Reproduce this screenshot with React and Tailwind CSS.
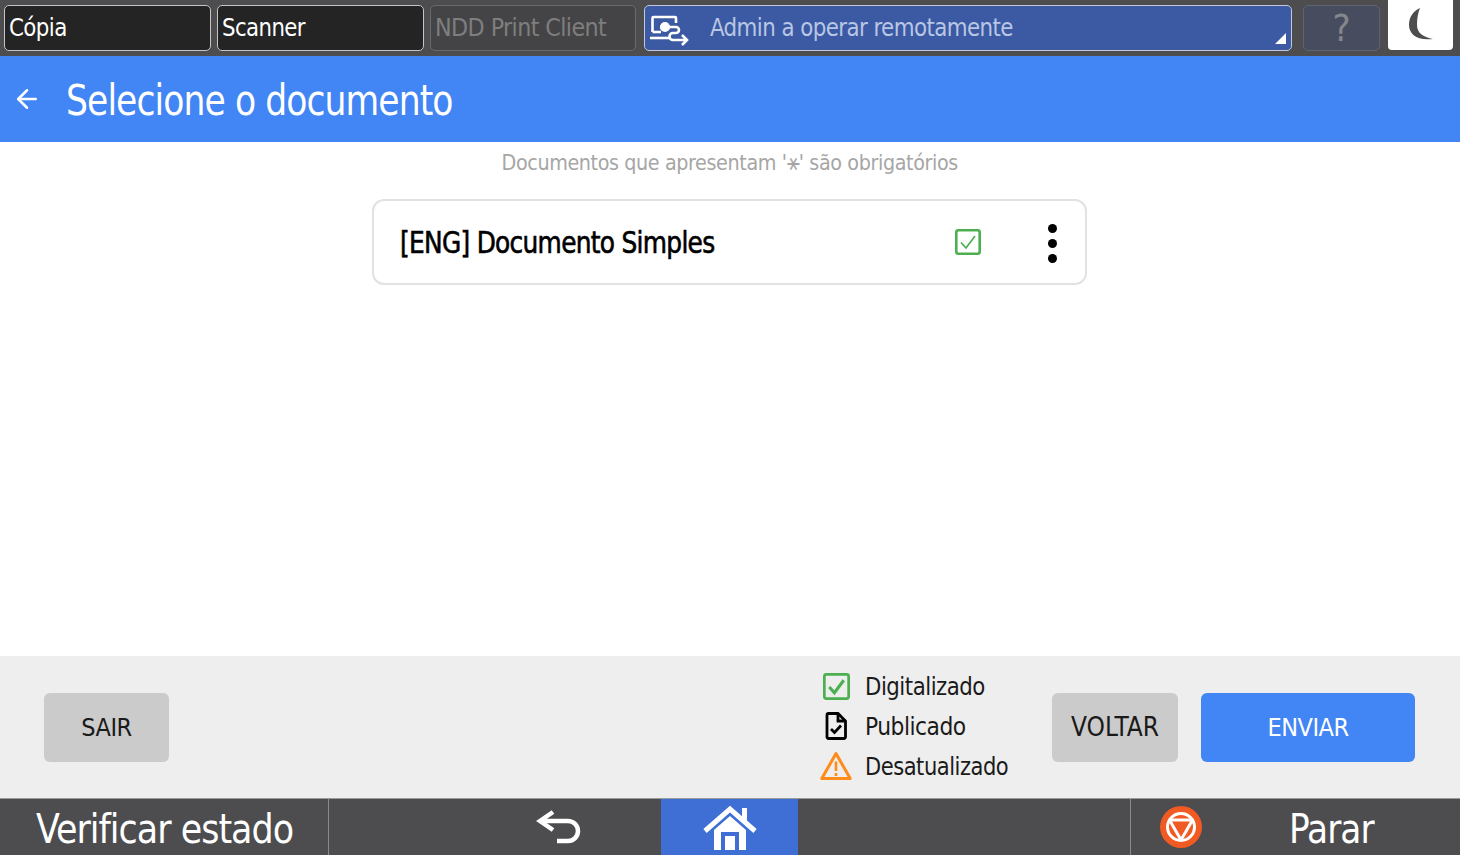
import { ArrowLeft } from 'lucide-react';

const font = { fontFamily: '"DejaVu Sans Condensed", "DejaVu Sans", sans-serif' };

function TopTab({ label, className, textClass }) {
  return (
    <div className={`h-[46px] rounded-[5px] border flex items-center pl-1 ${className}`}>
      <span className={`-mt-[2px] origin-left text-[25px] leading-none tracking-[-0.6px] ${textClass}`}>{label}</span>
    </div>
  );
}

function RemoteIcon() {
  return (
    <svg width="40" height="34" viewBox="0 0 40 34" fill="none" stroke="#fff" strokeWidth="2.600" className="shrink-0 mt-[4px]">
      <path d="M3.500 19V5a1 1 0 0 1 1-1H26a1 1 0 0 1 1 1v5" />
      <path d="M3.500 19H12" />
      <path d="M1 25h20" />
      <circle cx="16" cy="14" r="3.800" fill="#fff" />
      <path d="M16 14h11a3 3 0 0 1 0 6h-3a3.500 3.500 0 0 0 0 7h14" />
      <path d="M33 22l5 5-5 5" />
    </svg>
  );
}

function CheckBoxIcon({ size, check }) {
  return (
    <svg width={size} height={size} viewBox="0 0 26 26" fill="none" className="shrink-0">
      <rect x="1.300" y="1.300" width="23.400" height="23.400" rx="2" stroke="#4caf50" strokeWidth="2.600" />
      <path d="M6 13.500l5 5.500 9-12" stroke="#4caf50" strokeWidth={check} />
    </svg>
  );
}

function LegendRow({ icon, label, textClass }) {
  return (
    <div className="flex items-center h-10">
      <div className="w-[32px] flex justify-center mr-[13px]">{icon}</div>
      <span className={`origin-left text-[25px] leading-none tracking-[-0.5px] text-[#1a1a1a] ${textClass}`}>{label}</span>
    </div>
  );
}

export default function App() {
  return (
    <div style={font} className="w-[1460px] h-[855px] flex flex-col overflow-hidden bg-white">
      {/* system tab bar */}
      <div className="h-14 bg-[#4d4d4f] flex items-start pt-[5px] pl-[4px] shrink-0">
        <TopTab label="Cópia" className="w-[207px] bg-[#242424] border-[#c4c4c4] mr-[6px]" textClass="text-white scale-x-[0.95]" />
        <TopTab label="Scanner" className="w-[207px] bg-[#242424] border-[#c4c4c4] mr-[6px]" textClass="text-white scale-x-[0.945]" />
        <TopTab label="NDD Print Client" className="w-[206px] bg-[#444446] border-[#6a6a6a] mr-[8px]" textClass="text-[#7e7e7e] scale-x-[0.99]" />
        <div className="relative w-[648px] h-[46px] rounded-[5px] border border-[#c4c8d8] bg-[#3b5aa3] flex items-center pl-[4px] mr-[11px]">
          <RemoteIcon />
          <span className="-mt-[2px] ml-[21px] origin-left scale-x-[0.95] text-[25px] leading-none tracking-[-0.6px] text-[#b9c6e4]">Admin a operar remotamente</span>
          <div className="absolute right-[5px] bottom-[6px] w-[11px] h-[11px] bg-white [clip-path:polygon(100%_0,100%_100%,0_100%)]" />
        </div>
        <div className="w-[77px] h-[46px] rounded-[5px] border border-[#5e6273] bg-[#474c5f] flex items-center justify-center mr-[8px]">
          <span className="text-[38px] leading-none text-[#85878c]">?</span>
        </div>
        <div className="w-[65px] h-[50px] -mt-[5px] rounded-b-[4px] bg-white flex items-center justify-center">
          <svg width="26" height="34" viewBox="0 0 26 34" fill="#4d4d4f">
            <path d="M12 0C4 4 1 10 1 17C1 26 9 33 25 31C15 29 9 25 9 17C9 10 10 5 12 0z" />
          </svg>
        </div>
      </div>

      {/* title */}
      <div className="h-[86px] bg-[#4285f4] flex items-center shrink-0">
        <ArrowLeft size={30} strokeWidth={2} color="#fff" className="ml-[12px]" />
        <h1 className="ml-[24px] mt-[4px] origin-left scale-x-[0.915] text-[42px] leading-none tracking-[-1px] font-normal text-white">Selecione o documento</h1>
      </div>

      {/* content */}
      <div className="flex-1 flex flex-col items-center">
        <p className="mt-[9px] scale-x-[0.968] text-[22px] leading-6 tracking-[-0.4px] text-[#a6a6a6]">Documentos que apresentam '⚹' são obrigatórios</p>
        <div className="mt-[24px] mr-[2px] w-[715px] h-[86px] rounded-[12px] border-2 border-[#e2e2e2] flex items-center pl-[26px]">
          <span className="origin-left scale-x-[0.892] text-[31px] leading-none tracking-[-0.8px] text-black [-webkit-text-stroke:0.6px_black]">[ENG] Documento Simples</span>
          <div className="ml-auto"><CheckBoxIcon size={26} check={1.7} /></div>
          <div className="ml-[67px] mr-[28px] mt-[2px] flex flex-col gap-[6px]">
            <span className="w-[9px] h-[9px] rounded-full bg-black" />
            <span className="w-[9px] h-[9px] rounded-full bg-black" />
            <span className="w-[9px] h-[9px] rounded-full bg-black" />
          </div>
        </div>
      </div>

      {/* actions */}
      <div className="h-[142px] bg-[#eeeeee] flex items-center pl-[44px] shrink-0">
        <button className="w-[125px] h-[69px] mt-[1px] rounded-[6px] bg-[#cbcbcb] text-[25px] tracking-[-0.5px] text-[#1a1a1a]">SAIR</button>
        <div className="ml-[651px] -mt-[2px] flex flex-col">
          <LegendRow icon={<CheckBoxIcon size={27} check={3} />} label="Digitalizado" textClass="scale-x-[0.945]" />
          <LegendRow
            label="Publicado"
            textClass="scale-x-[0.97]"
            icon={
              <svg width="22" height="28" viewBox="0 0 22 28" fill="none" stroke="#000" strokeWidth="2.800">
                <path d="M2 3a1.500 1.500 0 0 1 1.500-1.500H13L20.500 9v16a1.500 1.500 0 0 1-1.500 1.500H3.500A1.500 1.500 0 0 1 2 25z" />
                <path d="M13 2v7h7.500" />
                <path d="M6 17l3.500 3.500 6.500-7" />
              </svg>
            }
          />
          <LegendRow
            label="Desatualizado"
            textClass="scale-x-[0.935]"
            icon={
              <svg width="32" height="30" viewBox="0 0 32 30" fill="none" stroke="#ff8c1a" strokeWidth="3" strokeLinejoin="round">
                <path d="M16 2.500L1.800 27.500h28.400z" />
                <path d="M16 10.500v9.500M16 22v3" strokeWidth="2.600" />
              </svg>
            }
          />
        </div>
        <button className="ml-auto w-[126px] h-[69px] mt-[1px] rounded-[6px] bg-[#cbcbcb] text-[26px] text-[#1a1a1a]">VOLTAR</button>
        <button className="ml-[23px] mr-[45px] w-[214px] h-[69px] mt-[1px] rounded-[6px] bg-[#4285f4] text-[25px] tracking-[-0.5px] text-white">ENVIAR</button>
      </div>

      {/* bottom system bar */}
      <div className="h-[57px] bg-[#4d4d4f] border-t border-[#9a9a9a] flex shrink-0">
        <div className="w-[329px] border-r border-[#8a8a8a] flex items-center pl-[36px]">
          <span className="mt-[4px] origin-left scale-x-[0.97] text-[40px] leading-none tracking-[-1px] text-white">Verificar estado</span>
        </div>
        <div className="w-[332px] flex items-start justify-end pt-[10px] pr-[80px]">
          <svg width="46" height="36" viewBox="0 0 46 36" fill="none" stroke="#fff" strokeWidth="4.500">
            <path d="M18 3L5 12l13 9" />
            <path d="M5 12h28a10 10 0 0 1 0 20H22" />
          </svg>
        </div>
        <div className="w-[137px] bg-[#3f6fd4] flex items-start justify-center pt-[6px]">
          <svg width="56" height="46" viewBox="0 0 56 46">
            <path d="M3 26L28 4l25 22" fill="none" stroke="#fff" strokeWidth="5" />
            <path d="M40 3h5v13h-5z" fill="#fff" />
            <path d="M28 11L44 25V45H12V25z" fill="#fff" />
            <path d="M19 27h18v18H19z" fill="#3f6fd4" />
            <path d="M23 31h10v14H23z" fill="#fff" />
          </svg>
        </div>
        <div className="w-[333px] border-r border-[#8a8a8a]" />
        <div className="flex-1 flex items-center pl-[28px]">
          <svg width="44" height="44" viewBox="0 0 44 44" fill="none" className="shrink-0">
            <circle cx="22" cy="22" r="21" fill="#f15a22" />
            <circle cx="22" cy="22" r="13.500" stroke="#fff" strokeWidth="3" />
            <path d="M10.500 15h23L22 35z" stroke="#fff" strokeWidth="3" strokeLinejoin="round" />
          </svg>
          <span className="ml-[86px] mt-[4px] origin-left scale-x-[0.955] text-[40px] leading-none tracking-[-1px] text-white">Parar</span>
        </div>
      </div>
    </div>
  );
}
